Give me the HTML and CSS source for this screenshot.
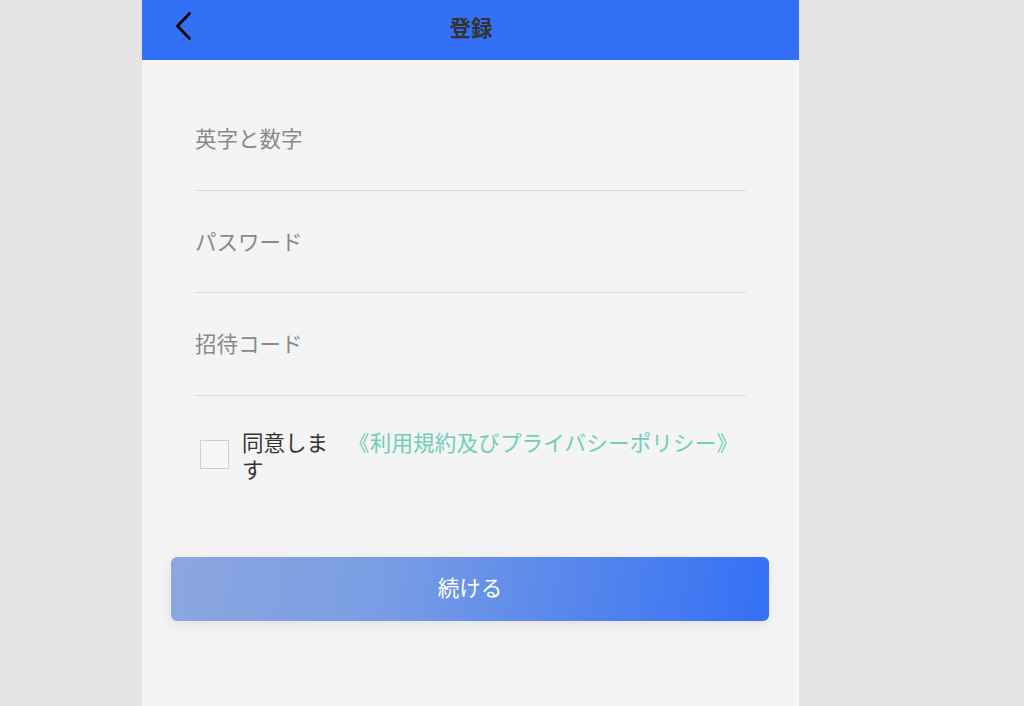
FILE: index.html
```html
<!DOCTYPE html>
<html lang="ja">
<head>
<meta charset="utf-8">
<title>登録</title>
<link rel="stylesheet" href="styles.css">
</head>
<body>
<div class="page">
  <div class="panel">
    <header class="topbar">
      <span class="back">
        <svg width="20" height="30" viewBox="0 0 20 30"><polyline points="14.5,1.5 2.5,14 14.5,26.5" fill="none" stroke="#000" stroke-width="2.6" stroke-linecap="round" stroke-linejoin="round"/></svg>
      </span>
      <h1 class="title">登録</h1>
    </header>
    <form class="form">
      <div class="field"><span class="placeholder">英字と数字</span></div>
      <div class="field"><span class="placeholder">パスワード</span></div>
      <div class="field"><span class="placeholder">招待コード</span></div>
      <div class="agree">
        <span class="checkbox"></span>
        <span class="agree-text">同意します</span>
        <span class="link">《利用規約及びプライバシーポリシー》</span>
      </div>
      <div class="btn-wrap">
        <button type="button" class="btn">続ける</button>
      </div>
    </form>
  </div>
</div>
</body>
</html>
```

FILE: styles.css
```css
* { box-sizing: border-box; }
html, body {
  margin: 0;
  padding: 0;
  height: 100%;
  background: #e5e5e5;
  font-family: "Noto Sans CJK JP", "Noto Sans", sans-serif;
}
.page {
  height: 706px;
  overflow: hidden;
  padding-left: 142px;
}
.panel {
  width: 657px;
  height: 706px;
  background: #f4f4f4;
}
.topbar {
  height: 60px;
  background: #3370f5;
  display: flex;
  align-items: center;
  justify-content: center;
  position: relative;
}
.back {
  position: absolute;
  left: 33px;
  top: 12px;
  width: 20px;
  height: 30px;
  display: block;
}
.back svg { display: block; }
.title {
  margin: 0 0 6px 1px;
  font-size: 21.5px;
  font-weight: 700;
  color: #333;
  line-height: 1;
}
.form {
  padding-top: 28px;
}
.field {
  margin: 0 53px;
  height: 102.5px;
  border-bottom: 1px solid #dcdcdc;
  display: flex;
  align-items: center;
}
.placeholder {
  font-size: 21.5px;
  color: #8a8a8a;
  line-height: 27px;
  margin-top: -2px;
}
.agree {
  display: flex;
  align-items: flex-start;
  margin: 32px 53px 0 58px;
}
.checkbox {
  align-self: center;
  width: 29px;
  height: 29px;
  border: 1px solid #cfcfcf;
  background: #f6f6f6;
  flex: none;
}
.agree-text {
  margin-left: 13px;
  width: 100px;
  font-size: 21.5px;
  line-height: 27px;
  color: #333;
  flex: none;
}
.link {
  margin-left: 6px;
  font-size: 21.5px;
  line-height: 27px;
  letter-spacing: 0.2px;
  color: #6dd0b5;
  white-space: nowrap;
}
.btn-wrap {
  margin: 75px 30px 0 29px;
}
.btn {
  display: block;
  width: 100%;
  height: 64px;
  border: none;
  border-radius: 6px;
  background: linear-gradient(100deg, #8ca6e0 0%, #7a9de4 35%, #3370f5 100%);
  box-shadow: 0 4px 14px rgba(0, 0, 0, 0.08);
  color: #fff;
  font-family: "Noto Sans CJK JP", "Noto Sans", sans-serif;
  font-size: 21.5px;
  line-height: 1;
  padding: 0 0 4px 0;
}
```
